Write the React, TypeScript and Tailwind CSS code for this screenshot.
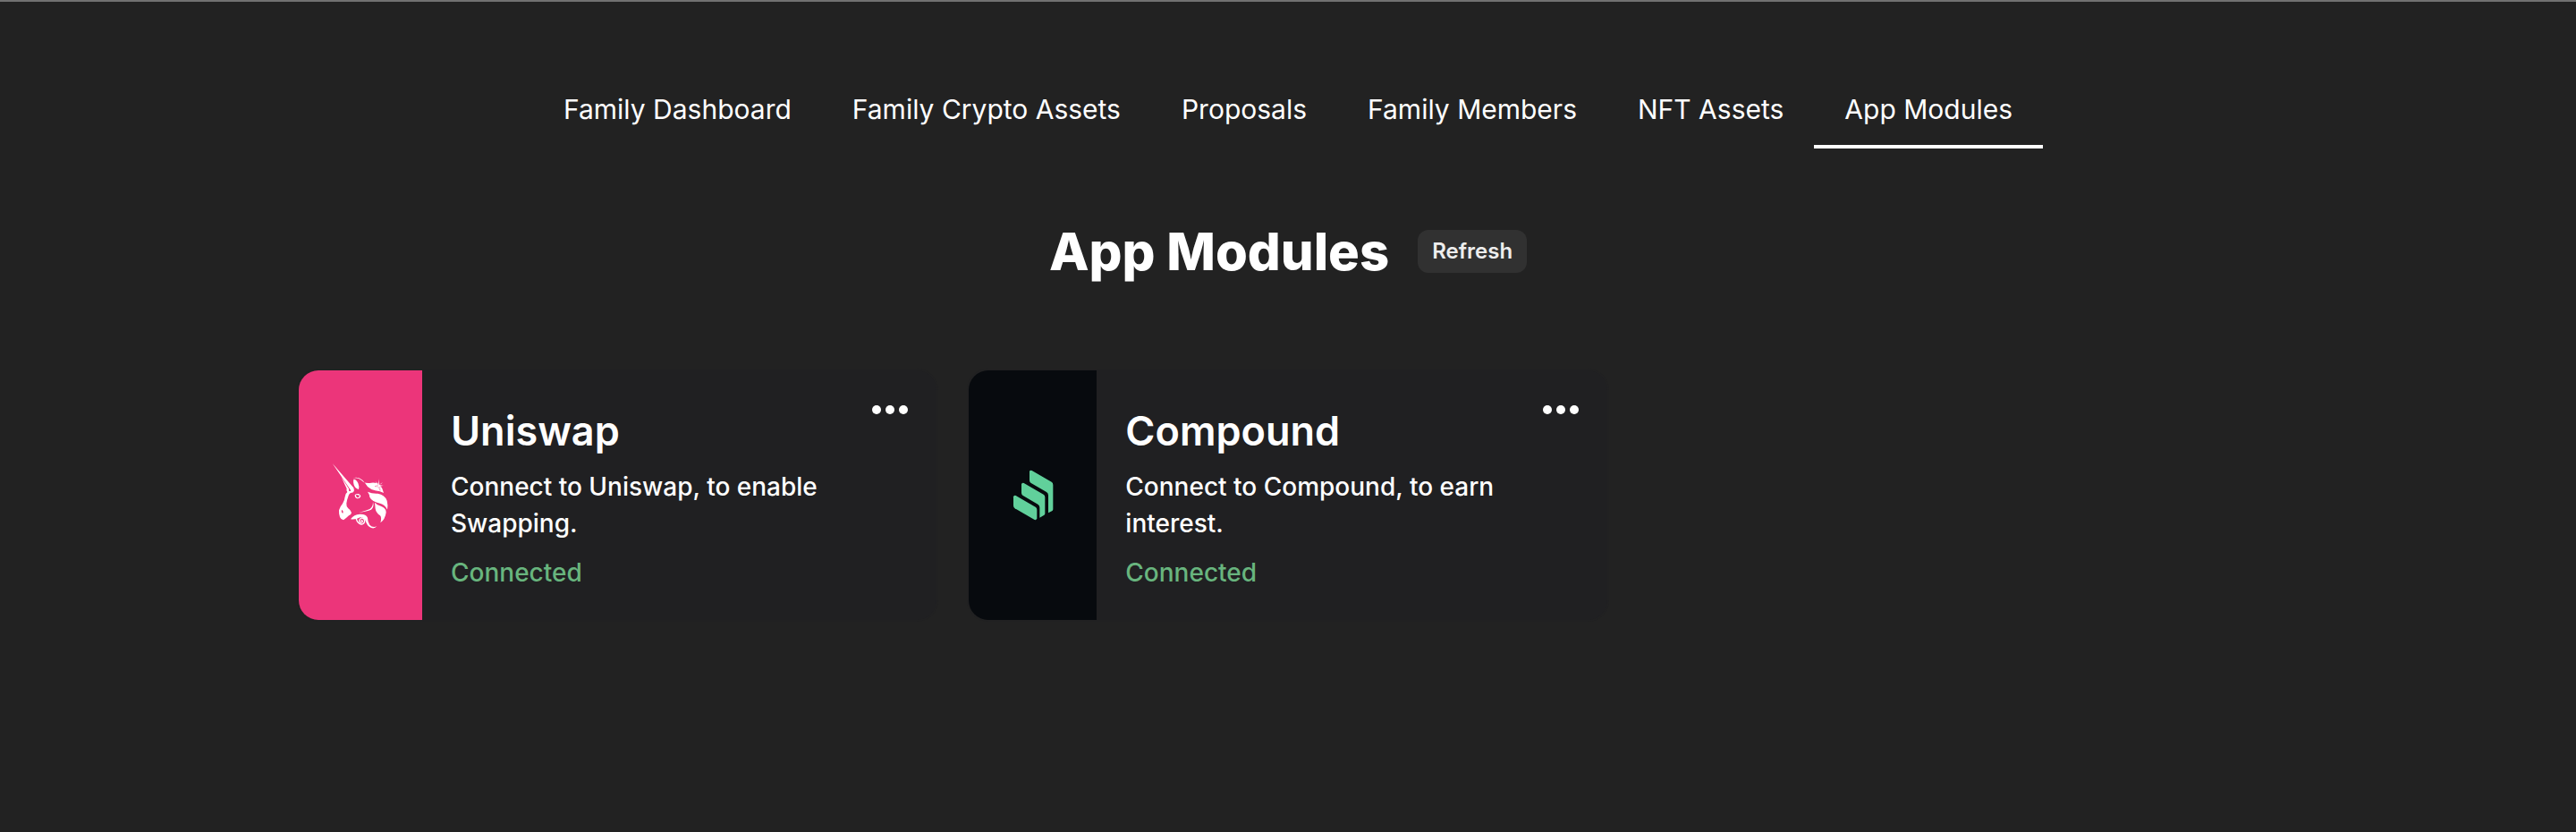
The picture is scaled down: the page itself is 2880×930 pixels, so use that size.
import type { ReactNode } from "react";

type Tab = { label: string; active?: boolean };

type Module = {
  name: string;
  description: string;
  panel: string;
  logo: ReactNode;
};

const tabs: Tab[] = [
  { label: "Family Dashboard" },
  { label: "Family Crypto Assets" },
  { label: "Proposals" },
  { label: "Family Members" },
  { label: "NFT Assets" },
  { label: "App Modules", active: true },
];

function UniswapLogo() {
  return (
    <svg viewBox="18 20 222 222" className="h-[74px] w-[74px]" fill="#fff" aria-hidden="true">
      {/* horns */}
      <path d="M35 23 L106 105 Q109 112 104 120 L95 120 L97 114 Z" />
      <path d="M65 69 L90 108 L91 120 L84 117 Q81 112 83 108 Z" />
      {/* face and muzzle */}
      <path
        fillRule="evenodd"
        d="M83 112 Q88 118 97 115 L106 108 Q109 117 104 120 Q91 121 88 134 Q84 144 82 157 Q81 168 88 174 Q96 179 99 188 Q98 196 90 198 Q83 205 72 213 Q63 211 60 203 Q56 192 57 180 Q60 168 69 158 Q76 147 77 135 Q78 124 85 119 Z M66 179 Q73 182 70 190 Q64 188 66 179 Z"
      />
      {/* ear */}
      <path d="M106 76 Q115 76 121 89 Q126 101 123 110 Q111 107 107 95 Q104 84 106 76 Z" />
      <path d="M104 72 Q121 66 136 79 Q145 88 153 101 Q164 111 178 114 Q196 116 207 122 Q203 105 194 95 Q181 85 160 89 Q147 90 139 85 Q122 69 104 72 Z" />
      {/* eye */}
      <path
        fillRule="evenodd"
        d="M110 129 Q114 124 123 125 Q130 128 130 134 Q126 142 118 141 Q110 139 110 129 Z M114 129 Q114 138 121 138 Q128 134 124 128 Q122 132 119 128 Z"
      />
      {/* mane */}
      <path d="M153 118 Q168 125 187 124 Q211 128 218 148 Q222 164 219 178 Q212 162 195 157 Q167 151 160 136 Q159 126 153 118 Z" />
      <path d="M177 154 Q184 163 199 167 Q215 174 215 187 Q212 210 196 222 Q201 205 195 198 Q181 188 179 175 Z" />
      <path d="M171 152 Q176 169 165 178 Q151 184 124 187 Q150 181 160 176 Q171 169 171 152 Z" />
      {/* beard */}
      <path d="M96 210 Q107 194 127 193 Q148 192 153 205 Q153 219 160 229 Q169 239 184 234 Q176 243 165 239 Q153 234 148 221 Q142 202 128 204 Q112 213 96 210 Z" />
      <path
        d="M115 209 Q119 224 132 227 Q143 226 143 215 Q141 205 132 206 Q124 210 126 218 Q131 223 136 218 Q135 212 131 214"
        fill="none"
        stroke="#fff"
        strokeWidth="4"
      />
      {/* sparkle */}
      <path d="M190 74 L193 95 L206 97 L194 101 L195 114 L189 101 L177 100 L188 96 Z" stroke="#ec357a" strokeWidth="1" />
      <path d="M181 85 L187 92 M201 88 L196 93" stroke="#fff" strokeWidth="2" />
    </svg>
  );
}

function CompoundLogo() {
  return (
    <svg viewBox="0 12 237 237" className="h-[79px] w-[79px]" fill="#61d09b" aria-hidden="true">
      <path d="M108 51 Q109 46 116 48 L182 86 Q187 89 187 96 V178 Q187 182 183 184 L171 190 V131 Q171 124 165 120 L112 89 Q108 86 108 81 Z" />
      <path d="M81 94 Q82 88 89 90 L155 128 Q160 131 160 137 V192 Q160 196 156 198 L142 206 V172 Q142 165 136 161 L85 131 Q81 128 81 123 Z" />
      <path d="M54 136 Q55 130 62 132 L128 170 Q133 173 133 179 V208 Q132 215 125 213 L59 175 Q54 172 54 165 Z" />
    </svg>
  );
}

const modules: Module[] = [
  {
    name: "Uniswap",
    description: "Connect to Uniswap, to enable Swapping.",
    panel: "bg-[#ec357a]",
    logo: <UniswapLogo />,
  },
  {
    name: "Compound",
    description: "Connect to Compound, to earn interest.",
    panel: "bg-[#070a0e]",
    logo: <CompoundLogo />,
  },
];

function ModuleCard({ name, description, panel, logo }: Module) {
  return (
    <article className="flex overflow-hidden rounded-3xl border-2 border-[#212122] bg-[#202022]">
      <div className={`flex shrink-0 items-center px-8 ${panel}`}>{logo}</div>
      <div className="flex flex-1 items-start justify-between p-8">
        <div className="max-w-[430px]">
          <h2 className="text-[45px] leading-[72px] font-semibold">{name}</h2>
          <p className="mt-1.5 text-[28px] leading-[41px] font-medium">{description}</p>
          <p className="mt-3.5 text-[28px] leading-[41px] font-medium text-[#68b57e]">Connected</p>
        </div>
        <button type="button" aria-label={`${name} options`} className="flex gap-[5px] py-[7px]">
          <span className="size-2.5 rounded-full bg-white" />
          <span className="size-2.5 rounded-full bg-white" />
          <span className="size-2.5 rounded-full bg-white" />
        </button>
      </div>
    </article>
  );
}

export default function App() {
  return (
    <div className="min-h-screen border-t-2 border-[#717171] bg-[#222222] font-['Inter',sans-serif] text-white">
      <nav className="flex justify-center pt-[88px]">
        {tabs.map((tab) => (
          <a
            key={tab.label}
            href="#"
            aria-current={tab.active ? "page" : undefined}
            className={`border-b-4 px-[34px] pb-2 text-[30px] leading-[64px] ${tab.active ? "border-white" : "border-transparent"}`}
          >
            {tab.label}
          </a>
        ))}
      </nav>

      <main className="mx-auto max-w-[2216px] pt-[75px]">
        <div className="flex items-center justify-center gap-8">
          <h1 className="text-[58px] leading-[80px] font-extrabold">App Modules</h1>
          <button type="button" className="h-12 rounded-xl bg-[#313131] px-4 text-2xl font-semibold text-[#ededed]">
            Refresh
          </button>
        </div>

        <div className="mt-[91px] grid grid-cols-3 gap-8">
          {modules.map((mod) => (
            <ModuleCard key={mod.name} {...mod} />
          ))}
        </div>
      </main>
    </div>
  );
}
